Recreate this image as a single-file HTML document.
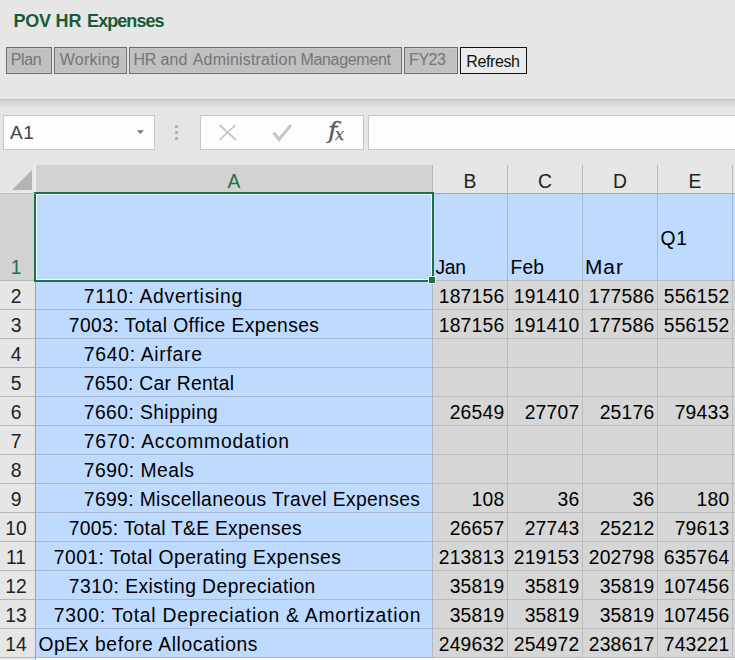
<!DOCTYPE html><html><head><meta charset="utf-8"><title>POV HR Expenses</title><style>
html,body{margin:0;padding:0}
body{width:735px;height:660px;overflow:hidden;position:relative;background:#e6e6e6;font-family:"Liberation Sans",sans-serif;}
.abs,.t,.n,.rh,.ch,.b{position:absolute}
.t,.n,.rh,.ch{white-space:nowrap;color:#000;font-size:19.3px;line-height:20px;height:20px}
.n{text-align:right}
.rh,.ch{text-align:center;color:#222}
.b{box-sizing:border-box;height:27px;top:47px;border:1px solid #6c6c6c;background:#c0c0c0;color:#767676;font-size:16px;line-height:16px;white-space:nowrap;box-shadow:inset 0 0 0 1px #c7c7c7}
.b span{position:absolute;top:4.1px}

</style></head><body>
<div class="abs" style="left:0;top:0;width:735px;height:99px;background:#e6e6e6"></div>
<div class="abs" style="left:0;top:99px;width:735px;height:1px;background:#c3c3c3"></div>
<div class="abs" style="left:0;top:100px;width:735px;height:9px;background:linear-gradient(#d1d1d1 0,#d5d5d5 25%,#dedede 55%,#e4e4e4 80%,#e6e6e6 100%)"></div>
<div class="abs" style="left:0;top:109px;width:735px;height:56px;background:#e6e6e6"></div>
<div class="abs" style="left:0;top:11px;width:300px;height:20px;font-weight:bold;font-size:18px;line-height:20px;color:#175c36;white-space:nowrap"><span class="abs" id="titleA" style="left:13.4px;top:0;letter-spacing:-0.197px">POV HR </span><span class="abs" id="titleB" style="left:87.08px;top:0;letter-spacing:-0.937px">Expenses</span></div>
<div class="b" style="left:6px;width:46px"><span id="bPlan" style="left:3.63px;letter-spacing:-0.292px">Plan</span></div>
<div class="b" style="left:54px;width:73px"><span id="bWork" style="left:4.800000000000002px;letter-spacing:0.238px">Working</span></div>
<div class="b" style="left:129px;width:273px"><span id="bHR1" style="left:3.45px;letter-spacing:-0.164px">HR </span><span id="bHR2" style="left:30.59px;letter-spacing:0.115px">and </span><span id="bHR3" style="left:62.76px;letter-spacing:0.187px">Administration </span><span id="bHR4" style="left:170.45px;letter-spacing:-0.315px">Management</span></div>
<div class="b" style="left:404px;width:54px"><span id="bFY" style="left:4.08px;letter-spacing:-0.466px">FY23</span></div>
<div class="b" style="left:460px;width:67px;background:#eaeaea;border-color:#111;color:#111;box-shadow:none"><span id="bRef" style="left:5.36px;top:5.6px;letter-spacing:-0.408px">Refresh</span></div>
<div class="abs" style="left:3.3px;top:115px;width:151.3px;height:35px;box-sizing:border-box;background:#fdfdfd;border:1px solid #c6c6c6"></div>
<div class="abs" id="nameA1" style="left:10.0px;top:122px;font-size:19px;line-height:22px;color:#444;letter-spacing:0.698px">A1</div>
<svg class="abs" style="left:136px;top:129px" width="9" height="6" viewBox="0 0 9 6"><path d="M0.8 1.2 L7.8 1.2 L4.3 4.9 Z" fill="#777"/></svg>
<div class="abs" style="left:175px;top:124.5px;width:3px;height:3px;background:#b4b4b4"></div>
<div class="abs" style="left:175px;top:130.5px;width:3px;height:3px;background:#b4b4b4"></div>
<div class="abs" style="left:175px;top:136.5px;width:3px;height:3px;background:#b4b4b4"></div>
<div class="abs" style="left:200.4px;top:115px;width:163.3px;height:35px;box-sizing:border-box;background:#fdfdfd;border:1px solid #c6c6c6"></div>
<svg class="abs" style="left:216px;top:122px" width="24" height="21" viewBox="0 0 24 21"><path d="M3.5 3 L20 18 M19.5 3 L3.5 18" stroke="#c3c3c3" stroke-width="1.7" fill="none"/></svg>
<svg class="abs" style="left:270px;top:122px" width="24" height="21" viewBox="0 0 24 21"><path d="M3.5 10.5 L9 17.5 L21 3" stroke="#c6c6c6" stroke-width="3" fill="none"/></svg>
<div class="abs" id="fx" style="left:327.6px;top:119.3px;font-family:'DejaVu Serif',serif;font-style:italic;font-size:22.5px;line-height:22.5px;color:#5a5a5a;-webkit-text-stroke:0.3px #5a5a5a;white-space:nowrap;transform:scaleX(1.12);transform-origin:0 0">f</div>
<div class="abs" id="fx2" style="left:335.1px;top:126.7px;-webkit-text-stroke:0.25px #5a5a5a;font-family:'DejaVu Serif',serif;font-style:italic;font-size:16.2px;line-height:16.2px;color:#5a5a5a;white-space:nowrap">x</div>
<div class="abs" style="left:368.2px;top:115px;width:380px;height:35px;box-sizing:border-box;background:#fdfdfd;border:1px solid #c6c6c6"></div>
<div class="abs" style="left:0;top:165px;width:735px;height:28px;background:#e6e6e6"></div>
<div class="abs" style="left:36px;top:165px;width:396px;height:28px;background:#d2d2d2"></div>
<div class="abs" style="left:0;top:193px;width:735px;height:1px;background:#a6a6a6"></div>
<svg class="abs" style="left:10px;top:168px" width="24" height="24" viewBox="0 0 24 24"><path d="M22 2 L22 22 L2 22 Z" fill="#b4b4b4"/></svg>
<div class="abs" style="left:34px;top:165px;width:1.6px;height:28px;background:#eeeeee"></div>
<div class="abs" style="left:0;top:192px;width:35px;height:1px;background:#ececec"></div>
<div class="abs" style="left:0;top:193px;width:35px;height:1px;background:#bcbcbc;z-index:2"></div>
<div class="abs" style="left:432px;top:165px;width:1px;height:28px;background:#b9b9b9"></div>
<div class="ch" style="left:36px;width:396px;top:171.5px;color:#1e7145">A</div>
<div class="abs" style="left:507px;top:165px;width:1px;height:28px;background:#b9b9b9"></div>
<div class="ch" style="left:433px;width:74px;top:171.5px;color:#222">B</div>
<div class="abs" style="left:582px;top:165px;width:1px;height:28px;background:#b9b9b9"></div>
<div class="ch" style="left:508px;width:74px;top:171.5px;color:#222">C</div>
<div class="abs" style="left:657px;top:165px;width:1px;height:28px;background:#b9b9b9"></div>
<div class="ch" style="left:583px;width:74px;top:171.5px;color:#222">D</div>
<div class="abs" style="left:732px;top:165px;width:1px;height:28px;background:#b9b9b9"></div>
<div class="ch" style="left:658px;width:74px;top:171.5px;color:#222">E</div>
<div class="abs" style="left:0;top:194px;width:35px;height:466px;background:#e6e6e6"></div>
<div class="abs" style="left:0;top:194px;width:35px;height:86px;background:#d2d2d2"></div>
<div class="abs" style="left:35px;top:194px;width:1px;height:466px;background:#a6a6a6"></div>
<div class="abs" style="left:36px;top:194px;width:699px;height:86px;background:#bedaff"></div>
<div class="abs" style="left:36px;top:280px;width:396px;height:378px;background:#bedaff"></div>
<div class="abs" style="left:433px;top:280px;width:302px;height:378px;background:#d6d6d6"></div>
<div class="abs" style="left:36px;top:658px;width:699px;height:2px;background:#fff"></div>
<div class="abs" style="left:0;top:280px;width:35px;height:1px;background:#b5b5b5"></div>
<div class="abs" style="left:36px;top:280px;width:396px;height:1px;background:#aab9d1"></div>
<div class="abs" style="left:433px;top:280px;width:302px;height:1px;background:#bcbcbc"></div>
<div class="abs" style="left:0;top:309px;width:35px;height:1px;background:#b5b5b5"></div>
<div class="abs" style="left:36px;top:309px;width:396px;height:1px;background:#aab9d1"></div>
<div class="abs" style="left:433px;top:309px;width:302px;height:1px;background:#bcbcbc"></div>
<div class="abs" style="left:0;top:338px;width:35px;height:1px;background:#b5b5b5"></div>
<div class="abs" style="left:36px;top:338px;width:396px;height:1px;background:#aab9d1"></div>
<div class="abs" style="left:433px;top:338px;width:302px;height:1px;background:#bcbcbc"></div>
<div class="abs" style="left:0;top:367px;width:35px;height:1px;background:#b5b5b5"></div>
<div class="abs" style="left:36px;top:367px;width:396px;height:1px;background:#aab9d1"></div>
<div class="abs" style="left:433px;top:367px;width:302px;height:1px;background:#bcbcbc"></div>
<div class="abs" style="left:0;top:396px;width:35px;height:1px;background:#b5b5b5"></div>
<div class="abs" style="left:36px;top:396px;width:396px;height:1px;background:#aab9d1"></div>
<div class="abs" style="left:433px;top:396px;width:302px;height:1px;background:#bcbcbc"></div>
<div class="abs" style="left:0;top:425px;width:35px;height:1px;background:#b5b5b5"></div>
<div class="abs" style="left:36px;top:425px;width:396px;height:1px;background:#aab9d1"></div>
<div class="abs" style="left:433px;top:425px;width:302px;height:1px;background:#bcbcbc"></div>
<div class="abs" style="left:0;top:454px;width:35px;height:1px;background:#b5b5b5"></div>
<div class="abs" style="left:36px;top:454px;width:396px;height:1px;background:#aab9d1"></div>
<div class="abs" style="left:433px;top:454px;width:302px;height:1px;background:#bcbcbc"></div>
<div class="abs" style="left:0;top:483px;width:35px;height:1px;background:#b5b5b5"></div>
<div class="abs" style="left:36px;top:483px;width:396px;height:1px;background:#aab9d1"></div>
<div class="abs" style="left:433px;top:483px;width:302px;height:1px;background:#bcbcbc"></div>
<div class="abs" style="left:0;top:512px;width:35px;height:1px;background:#b5b5b5"></div>
<div class="abs" style="left:36px;top:512px;width:396px;height:1px;background:#aab9d1"></div>
<div class="abs" style="left:433px;top:512px;width:302px;height:1px;background:#bcbcbc"></div>
<div class="abs" style="left:0;top:541px;width:35px;height:1px;background:#b5b5b5"></div>
<div class="abs" style="left:36px;top:541px;width:396px;height:1px;background:#aab9d1"></div>
<div class="abs" style="left:433px;top:541px;width:302px;height:1px;background:#bcbcbc"></div>
<div class="abs" style="left:0;top:570px;width:35px;height:1px;background:#b5b5b5"></div>
<div class="abs" style="left:36px;top:570px;width:396px;height:1px;background:#aab9d1"></div>
<div class="abs" style="left:433px;top:570px;width:302px;height:1px;background:#bcbcbc"></div>
<div class="abs" style="left:0;top:599px;width:35px;height:1px;background:#b5b5b5"></div>
<div class="abs" style="left:36px;top:599px;width:396px;height:1px;background:#aab9d1"></div>
<div class="abs" style="left:433px;top:599px;width:302px;height:1px;background:#bcbcbc"></div>
<div class="abs" style="left:0;top:628px;width:35px;height:1px;background:#b5b5b5"></div>
<div class="abs" style="left:36px;top:628px;width:396px;height:1px;background:#aab9d1"></div>
<div class="abs" style="left:433px;top:628px;width:302px;height:1px;background:#bcbcbc"></div>
<div class="abs" style="left:0;top:657px;width:35px;height:1px;background:#b5b5b5"></div>
<div class="abs" style="left:36px;top:657px;width:396px;height:1px;background:#aab9d1"></div>
<div class="abs" style="left:433px;top:657px;width:302px;height:1px;background:#bcbcbc"></div>
<div class="abs" style="left:432px;top:194px;width:1px;height:86px;background:#aab9d1"></div>
<div class="abs" style="left:432px;top:280px;width:1px;height:378px;background:#aeb6c4"></div>
<div class="abs" style="left:507px;top:194px;width:1px;height:86px;background:#aab9d1"></div>
<div class="abs" style="left:507px;top:280px;width:1px;height:378px;background:#bcbcbc"></div>
<div class="abs" style="left:582px;top:194px;width:1px;height:86px;background:#aab9d1"></div>
<div class="abs" style="left:582px;top:280px;width:1px;height:378px;background:#bcbcbc"></div>
<div class="abs" style="left:657px;top:194px;width:1px;height:86px;background:#aab9d1"></div>
<div class="abs" style="left:657px;top:280px;width:1px;height:378px;background:#bcbcbc"></div>
<div class="abs" style="left:732px;top:194px;width:1px;height:86px;background:#aab9d1"></div>
<div class="abs" style="left:732px;top:280px;width:1px;height:378px;background:#bcbcbc"></div>
<div class="abs" style="left:34px;top:192px;width:400px;height:90px;box-sizing:border-box;border:2px solid #1e7145;box-shadow:inset 0 0 0 1px #f4fbff"></div>
<div class="abs" style="left:428px;top:276px;width:8px;height:8px;box-sizing:border-box;background:#1e7145;border:1px solid #e9f6f4"></div>
<div class="abs" style="left:36px;top:192px;width:396px;height:2px;background:#1e7145"></div>
<div class="rh" id="rh1" style="left:-1px;width:34px;top:257.8px;color:#1e7145">1</div>
<div class="rh" id="rh2" style="left:-1px;width:34px;top:286.8px;color:#222">2</div>
<div class="rh" id="rh3" style="left:-1px;width:34px;top:315.8px;color:#222">3</div>
<div class="rh" id="rh4" style="left:-1px;width:34px;top:344.8px;color:#222">4</div>
<div class="rh" id="rh5" style="left:-1px;width:34px;top:373.8px;color:#222">5</div>
<div class="rh" id="rh6" style="left:-1px;width:34px;top:402.8px;color:#222">6</div>
<div class="rh" id="rh7" style="left:-1px;width:34px;top:431.8px;color:#222">7</div>
<div class="rh" id="rh8" style="left:-1px;width:34px;top:460.8px;color:#222">8</div>
<div class="rh" id="rh9" style="left:-1px;width:34px;top:489.8px;color:#222">9</div>
<div class="rh" id="rh10" style="left:-1px;width:34px;top:518.8px;color:#222">10</div>
<div class="rh" id="rh11" style="left:-1px;width:34px;top:547.8px;color:#222">11</div>
<div class="rh" id="rh12" style="left:-1px;width:34px;top:576.8px;color:#222">12</div>
<div class="rh" id="rh13" style="left:-1px;width:34px;top:605.8px;color:#222">13</div>
<div class="rh" id="rh14" style="left:-1px;width:34px;top:634.8px;color:#222">14</div>
<div class="t" id="L2" style="left:83.85px;top:286.8px;letter-spacing:0.744px">7110: Advertising</div>
<div class="t" id="L3" style="left:68.85px;top:315.8px;letter-spacing:0.414px">7003: Total Office Expenses</div>
<div class="t" id="L4" style="left:83.85px;top:344.8px;letter-spacing:0.727px">7640: Airfare</div>
<div class="t" id="L5" style="left:83.85px;top:373.8px;letter-spacing:0.292px">7650: Car Rental</div>
<div class="t" id="L6" style="left:83.85px;top:402.8px;letter-spacing:0.411px">7660: Shipping</div>
<div class="t" id="L7" style="left:83.85px;top:431.8px;letter-spacing:0.798px">7670: Accommodation</div>
<div class="t" id="L8" style="left:83.85px;top:460.8px;letter-spacing:0.511px">7690: Meals</div>
<div class="t" id="L9" style="left:83.85px;top:489.8px;letter-spacing:0.364px">7699: Miscellaneous Travel Expenses</div>
<div class="t" id="L10" style="left:68.85px;top:518.8px;letter-spacing:0.268px">7005: Total T&amp;E Expenses</div>
<div class="t" id="L11" style="left:53.85px;top:547.8px;letter-spacing:0.449px">7001: Total Operating Expenses</div>
<div class="t" id="L12" style="left:68.85px;top:576.8px;letter-spacing:0.453px">7310: Existing Depreciation</div>
<div class="t" id="L13" style="left:53.85px;top:605.8px;letter-spacing:0.772px">7300: Total Depreciation &amp; Amortization</div>
<div class="t" id="L14" style="left:38.45px;top:634.8px;letter-spacing:0.603px">OpEx before Allocations</div>
<div class="n" style="left:434.5px;width:70px;top:286.8px;letter-spacing:0.250px">187156</div>
<div class="n" style="left:509.5px;width:70px;top:286.8px;letter-spacing:0.250px">191410</div>
<div class="n" style="left:584.5px;width:70px;top:286.8px;letter-spacing:0.250px">177586</div>
<div class="n" style="left:659.5px;width:70px;top:286.8px;letter-spacing:0.250px">556152</div>
<div class="n" style="left:434.5px;width:70px;top:315.8px;letter-spacing:0.250px">187156</div>
<div class="n" style="left:509.5px;width:70px;top:315.8px;letter-spacing:0.250px">191410</div>
<div class="n" style="left:584.5px;width:70px;top:315.8px;letter-spacing:0.250px">177586</div>
<div class="n" style="left:659.5px;width:70px;top:315.8px;letter-spacing:0.250px">556152</div>
<div class="n" style="left:434.5px;width:70px;top:402.8px;letter-spacing:0.250px">26549</div>
<div class="n" style="left:509.5px;width:70px;top:402.8px;letter-spacing:0.250px">27707</div>
<div class="n" style="left:584.5px;width:70px;top:402.8px;letter-spacing:0.250px">25176</div>
<div class="n" style="left:659.5px;width:70px;top:402.8px;letter-spacing:0.250px">79433</div>
<div class="n" style="left:434.5px;width:70px;top:489.8px;letter-spacing:0.250px">108</div>
<div class="n" style="left:509.5px;width:70px;top:489.8px;letter-spacing:0.250px">36</div>
<div class="n" style="left:584.5px;width:70px;top:489.8px;letter-spacing:0.250px">36</div>
<div class="n" style="left:659.5px;width:70px;top:489.8px;letter-spacing:0.250px">180</div>
<div class="n" style="left:434.5px;width:70px;top:518.8px;letter-spacing:0.250px">26657</div>
<div class="n" style="left:509.5px;width:70px;top:518.8px;letter-spacing:0.250px">27743</div>
<div class="n" style="left:584.5px;width:70px;top:518.8px;letter-spacing:0.250px">25212</div>
<div class="n" style="left:659.5px;width:70px;top:518.8px;letter-spacing:0.250px">79613</div>
<div class="n" style="left:434.5px;width:70px;top:547.8px;letter-spacing:0.250px">213813</div>
<div class="n" style="left:509.5px;width:70px;top:547.8px;letter-spacing:0.250px">219153</div>
<div class="n" style="left:584.5px;width:70px;top:547.8px;letter-spacing:0.250px">202798</div>
<div class="n" style="left:659.5px;width:70px;top:547.8px;letter-spacing:0.250px">635764</div>
<div class="n" style="left:434.5px;width:70px;top:576.8px;letter-spacing:0.250px">35819</div>
<div class="n" style="left:509.5px;width:70px;top:576.8px;letter-spacing:0.250px">35819</div>
<div class="n" style="left:584.5px;width:70px;top:576.8px;letter-spacing:0.250px">35819</div>
<div class="n" style="left:659.5px;width:70px;top:576.8px;letter-spacing:0.250px">107456</div>
<div class="n" style="left:434.5px;width:70px;top:605.8px;letter-spacing:0.250px">35819</div>
<div class="n" style="left:509.5px;width:70px;top:605.8px;letter-spacing:0.250px">35819</div>
<div class="n" style="left:584.5px;width:70px;top:605.8px;letter-spacing:0.250px">35819</div>
<div class="n" style="left:659.5px;width:70px;top:605.8px;letter-spacing:0.250px">107456</div>
<div class="n" style="left:434.5px;width:70px;top:634.8px;letter-spacing:0.250px">249632</div>
<div class="n" style="left:509.5px;width:70px;top:634.8px;letter-spacing:0.250px">254972</div>
<div class="n" style="left:584.5px;width:70px;top:634.8px;letter-spacing:0.250px">238617</div>
<div class="n" style="left:659.5px;width:70px;top:634.8px;letter-spacing:0.250px">743221</div>
<div class="t" id="hJan" style="left:435.42px;top:257.8px;letter-spacing:-0.208px">Jan</div>
<div class="t" id="hFeb" style="left:510.62px;top:257.8px;letter-spacing:0.036px">Feb</div>
<div class="t" id="hMar" style="left:584.88px;top:257.8px;letter-spacing:0.921px;transform:scaleX(1.08);transform-origin:0 0">Mar</div>
<div class="t" id="hQ1" style="left:660.56px;top:228.6px;letter-spacing:0.784px">Q1</div>
</body></html>
